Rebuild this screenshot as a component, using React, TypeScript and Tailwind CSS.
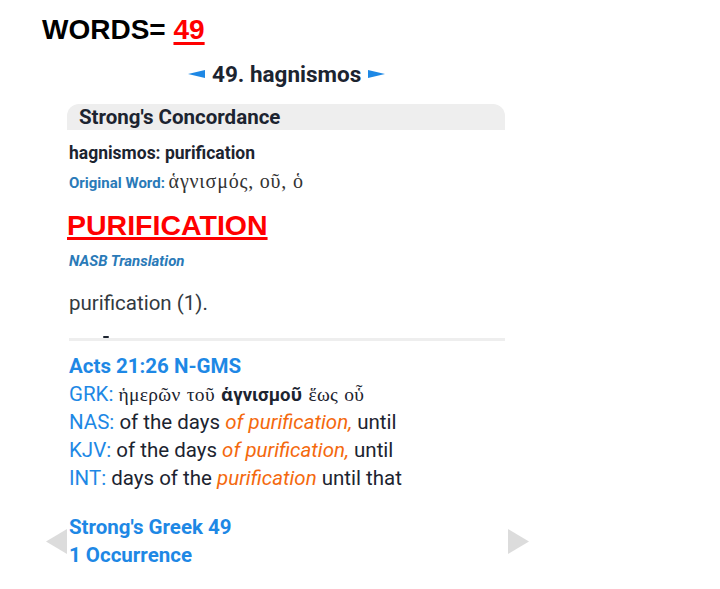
const roboto = "font-['Roboto','Liberation_Sans',sans-serif]";

function Arrow({ dir }: { dir: "left" | "right" }) {
  return (
    <svg width="17" height="8" viewBox="0 0 17 8" className="shrink-0">
      {dir === "left" ? (
        <polygon points="0,4 17,0 17,8" fill="#1e88e5" />
      ) : (
        <polygon points="17,4 0,0 0,8" fill="#1e88e5" />
      )}
    </svg>
  );
}

function NavTri({ dir }: { dir: "left" | "right" }) {
  return (
    <svg width="21" height="25" viewBox="0 0 21 25" className="shrink-0">
      {dir === "left" ? (
        <polygon points="0,12.5 21,0 21,25" fill="#dcdcdc" />
      ) : (
        <polygon points="21,12.5 0,0 0,25" fill="#dcdcdc" />
      )}
    </svg>
  );
}

function VerseLine({ label, children }: { label: string; children: React.ReactNode }) {
  return (
    <div className="h-[28px] leading-[28px] text-[20.5px] text-[#1c2430] whitespace-nowrap">
      <span className="text-[#1e88e5]">{label}</span> {children}
    </div>
  );
}

const Hl = ({ children }: { children: React.ReactNode }) => (
  <i className="text-[#f4690e]">{children}</i>
);

const serif = "font-['Liberation_Serif','DejaVu_Serif',serif] font-normal";

export default function App() {
  return (
    <div className={`w-[720px] h-[589px] bg-white overflow-hidden ${roboto}`}>
      <div className="pl-[42px] pt-[14px] h-[46px] font-['Liberation_Sans',Arial,sans-serif] font-bold text-[28px] leading-[32px] text-black">
        WORDS= <span className="text-[#ff0000] underline decoration-[3px] underline-offset-[3px]">49</span>
      </div>

      <div className="mt-[15px] h-[26px] flex items-center gap-[7px] pl-[188px] text-[22.5px] font-bold text-[#1c2430]">
        <Arrow dir="left" />
        <span className="leading-[26px]">49. hagnismos</span>
        <Arrow dir="right" />
      </div>

      <div className="pl-[67px] w-[505px]">
        <div className="mt-[17px] h-[26px] bg-[#eeeeee] rounded-t-[12px] pl-[12px] text-[20.5px] font-bold leading-[26px] text-[#1c2430]">
          Strong's Concordance
        </div>

        <div className="pl-[2px] mt-[13px] h-[20px] text-[17.5px] font-bold leading-[20px] text-[#1c2430]">
          hagnismos: purification
        </div>
        <div className="pl-[2px] mt-[8px] h-[20px] leading-[20px] whitespace-nowrap">
          <span className="text-[15px] font-bold text-[#2a7ab8]">Original Word: </span>
          <span className={`${serif} text-[20px] tracking-[0.8px] text-[#333]`}>ἁγνισμός, οῦ, ὁ</span>
        </div>

        <div className="mt-[18px] h-[32px] leading-[32px] font-['Liberation_Sans',Arial,sans-serif] font-bold text-[28.5px] text-[#ff0000] underline decoration-[3px] underline-offset-[2px]">
          PURIFICATION
        </div>
        <div className="pl-[2px] mt-[11px] h-[18px] leading-[18px] text-[15px] font-bold italic text-[#2a7ab8]">
          NASB Translation
        </div>
        <div className="pl-[2px] mt-[21px] h-[24px] leading-[24px] text-[20.5px] text-[#333a40]">
          purification (1).
        </div>

        <div className="h-[23px] flex items-end pl-[36px]">
          <div className="w-[6px] h-[2px] bg-[#1c2430] rounded-full" />
        </div>
        <div className="ml-[2px] h-[3px] bg-[#eeeeee]" />

        <div className="pl-[2px] pt-[11px]">
          <div className="h-[28px] leading-[28px] text-[20.5px] font-bold text-[#1e88e5]">
            Acts 21:26 N-GMS
          </div>
          <VerseLine label="GRK:">
            <span className={`${serif} text-[19.5px] tracking-[0.3px] [word-spacing:1px]`}>
              ἡμερῶν τοῦ{" "}
              <b className="font-['Roboto','Noto_Sans',sans-serif] font-bold text-[18.5px] tracking-normal">ἁγνισμοῦ</b>{" "}
              ἕως οὗ
            </span>
          </VerseLine>
          <VerseLine label="NAS:">
            of the days <Hl>of purification,</Hl> until
          </VerseLine>
          <VerseLine label="KJV:">
            of the days <Hl>of purification,</Hl> until
          </VerseLine>
          <VerseLine label="INT:">
            days of the <Hl>purification</Hl> until that
          </VerseLine>
        </div>
      </div>

      <div className="mt-[21px] flex items-center pl-[46px]">
        <NavTri dir="left" />
        <div className="w-[438px] pl-[2px] pb-[1px] text-[20.5px] font-bold text-[#1e88e5]">
          <div className="h-[28px] leading-[28px]">Strong's Greek 49</div>
          <div className="h-[28px] leading-[28px]">1 Occurrence</div>
        </div>
        <div className="ml-[3px]">
          <NavTri dir="right" />
        </div>
      </div>
    </div>
  );
}
